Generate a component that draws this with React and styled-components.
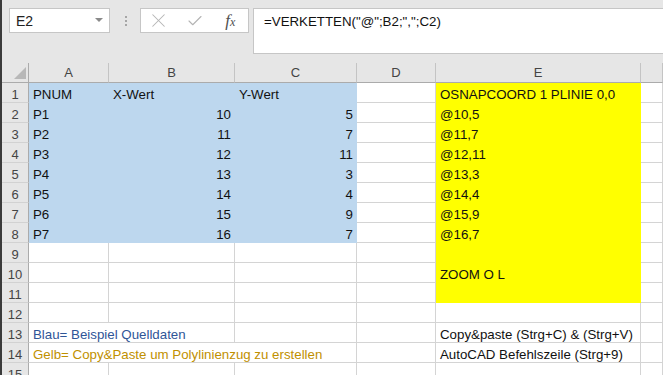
import React from "react";
import styled, { createGlobalStyle } from "styled-components";
import { X, Check } from "lucide-react";

const font = `"Liberation Sans", Arial, sans-serif`;
const chrome = "#e6e6e6";
const gridLine = "#d4d4d4";
const headLine = "#c4c4c4";
const blue = "#bdd7ee";
const yellow = "#ffff00";

const GlobalStyle = createGlobalStyle`
  html, body {
    margin: 0;
    padding: 0;
    background: #fff;
    overflow: hidden;
  }
  body {
    font-family: ${font};
  }
`;

const Window = styled.div`
  width: 663px;
  height: 375px;
  box-sizing: border-box;
  border-left: 2px solid #3b3b3b;
  display: flex;
  flex-direction: column;
  overflow: hidden;
`;

const FormulaBar = styled.div`
  flex: none;
  height: 63px;
  box-sizing: border-box;
  padding: 8px 0 0 7px;
  background: ${chrome};
  display: flex;
  align-items: flex-start;
`;

const NameBox = styled.div`
  width: 101px;
  height: 25px;
  box-sizing: border-box;
  background: #fff;
  border: 1px solid #c6c6c6;
  padding: 0 6px 0 6px;
  display: flex;
  align-items: center;
  justify-content: space-between;
  font-size: 14px;
  color: #222;
`;

const DropArrow = styled.span`
  width: 0;
  height: 0;
  border-left: 4px solid transparent;
  border-right: 4px solid transparent;
  border-top: 4px solid #8a8a8a;
  margin-top: -2px;
`;

const Grip = styled.div`
  width: 2px;
  height: 25px;
  margin: 0 13px 0 15px;
  display: flex;
  flex-direction: column;
  justify-content: center;
  gap: 2px;

  span {
    width: 2px;
    height: 2px;
    background: #a6a6a6;
  }
`;

const ButtonBox = styled.div`
  width: 109px;
  height: 25px;
  box-sizing: border-box;
  background: #fff;
  border: 1px solid #c6c6c6;
  display: flex;
  align-items: center;
`;

const BarButton = styled.span`
  width: 36px;
  height: 23px;
  display: flex;
  align-items: center;
  justify-content: center;
  color: #b4b4b4;
`;

const Fx = styled.span`
  font-family: "Liberation Serif", "Times New Roman", serif;
  font-style: italic;
  font-size: 17px;
  color: #505050;

  small {
    font-size: 12px;
  }
`;

const FormulaInput = styled.div`
  flex: 1;
  height: 46px;
  margin-left: 4px;
  box-sizing: border-box;
  background: #fff;
  border: 1px solid #c6c6c6;
  border-right: none;
  padding: 5px 0 0 10px;
  font-size: 13.3px;
  line-height: 16px;
  color: #111;
  white-space: nowrap;
`;

const Sheet = styled.div`
  flex: 1;
  display: grid;
  grid-template-columns: 27px 80px 126px 122px 79px 205px 1fr;
  grid-auto-rows: 20px;
  overflow: hidden;
  font-size: 13.3px;
`;

const Corner = styled.div`
  background: ${chrome};
  border-right: 1px solid #ababab;
  border-bottom: 1px solid #ababab;
  box-sizing: border-box;
  display: flex;
  align-items: flex-end;
  justify-content: flex-end;
  padding: 0 2px 3px 0;

  span {
    width: 0;
    height: 0;
    border-left: 12px solid transparent;
    border-bottom: 12px solid #b8b8b8;
  }
`;

const ColHead = styled.div`
  background: ${chrome};
  box-sizing: border-box;
  border-right: 1px solid ${headLine};
  border-bottom: 1px solid #ababab;
  display: flex;
  align-items: center;
  justify-content: center;
  color: #444;
  font-size: 13px;
`;

const RowHead = styled.div`
  background: ${chrome};
  box-sizing: border-box;
  border-right: 1px solid #ababab;
  border-bottom: 1px solid #d2d2d2;
  display: flex;
  align-items: flex-end;
  justify-content: center;
  line-height: 15px;
  color: #444;
  font-size: 13px;
`;

const tones = {
  ink: "#111",
  blue: "#2f5597",
  gold: "#bf9000",
};

const Cell = styled.div`
  grid-column: span ${(p) => p.$span || 1};
  box-sizing: border-box;
  background: ${(p) => p.$fill || "#fff"};
  border-right: 1px solid ${(p) => p.$fill || gridLine};
  border-bottom: 1px solid ${(p) => p.$fill || gridLine};
  padding: 0 3px 0 4px;
  display: flex;
  align-items: flex-end;
  justify-content: ${(p) => (p.$right ? "flex-end" : "flex-start")};
  line-height: 15px;
  white-space: nowrap;
  color: ${(p) => tones[p.$tone || "ink"]};
`;

// F is only a sliver here, its letter sits off screen
const columns = ["A", "B", "C", "D", "E", ""];

const points = [
  [10, 5],
  [11, 7],
  [12, 11],
  [13, 3],
  [14, 4],
  [15, 9],
  [16, 7],
];

const blank = (n = 1) => Array.from({ length: n }, () => ({}));

const rows = [
  [
    { text: "PNUM", fill: blue },
    { text: "X-Wert", fill: blue },
    { text: "Y-Wert", fill: blue },
    {},
    { text: "OSNAPCOORD 1 PLINIE 0,0", fill: yellow },
    {},
  ],
  ...points.map(([x, y], i) => [
    { text: `P${i + 1}`, fill: blue },
    { text: x, fill: blue, right: true },
    { text: y, fill: blue, right: true },
    {},
    { text: `@${x},${y}`, fill: yellow },
    {},
  ]),
  [...blank(4), { fill: yellow }, {}],
  [...blank(4), { text: "ZOOM O L", fill: yellow }, {}],
  [...blank(4), { fill: yellow }, {}],
  blank(6),
  [
    { text: "Blau= Beispiel Quelldaten", span: 2, tone: "blue" },
    {},
    {},
    { text: "Copy&paste (Strg+C) & (Strg+V)" },
    {},
  ],
  [
    { text: "Gelb= Copy&Paste um Polylinienzug zu erstellen", span: 3, tone: "gold" },
    {},
    { text: "AutoCAD Befehlszeile (Strg+9)" },
    {},
  ],
  blank(6),
];

export default function App() {
  return (
    <>
      <GlobalStyle />
      <Window>
        <FormulaBar>
          <NameBox>
            E2
            <DropArrow />
          </NameBox>
          <Grip>
            <span />
            <span />
            <span />
          </Grip>
          <ButtonBox>
            <BarButton>
              <X size={23} strokeWidth={1.1} />
            </BarButton>
            <BarButton>
              <Check size={18} strokeWidth={1.5} />
            </BarButton>
            <BarButton>
              <Fx>
                f<small>x</small>
              </Fx>
            </BarButton>
          </ButtonBox>
          <FormulaInput>=VERKETTEN("@";B2;",";C2)</FormulaInput>
        </FormulaBar>
        <Sheet>
          <Corner>
            <span />
          </Corner>
          {columns.map((c, i) => (
            <ColHead key={i}>{c}</ColHead>
          ))}
          {rows.map((cells, r) => (
            <React.Fragment key={r}>
              <RowHead>{r + 1}</RowHead>
              {cells.map((c, i) => (
                <Cell
                  key={i}
                  $span={c.span}
                  $fill={c.fill}
                  $right={c.right}
                  $tone={c.tone}
                >
                  {c.text}
                </Cell>
              ))}
            </React.Fragment>
          ))}
        </Sheet>
      </Window>
    </>
  );
}
